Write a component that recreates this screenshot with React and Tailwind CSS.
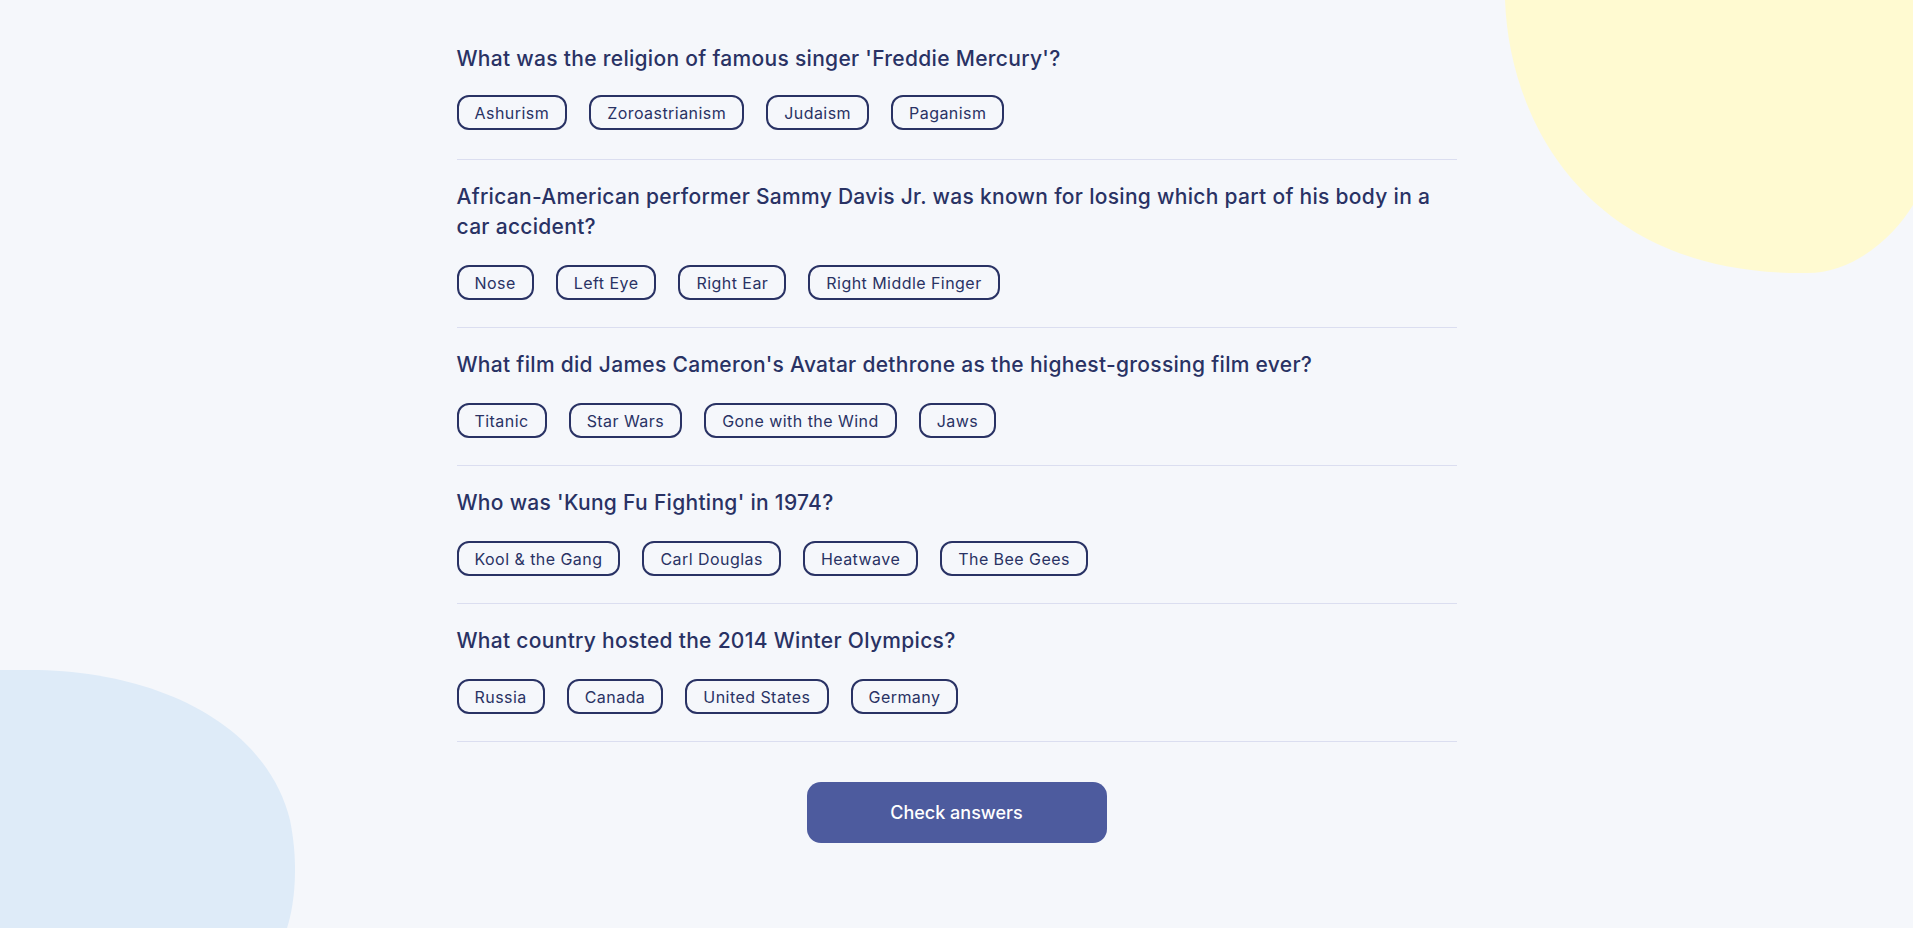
import { useState } from "react";

const questions = [
    {
        id: 1,
        question: "What was the religion of famous singer 'Freddie Mercury'?",
        answers: ["Ashurism", "Zoroastrianism", "Judaism", "Paganism"],
    },
    {
        id: 2,
        question: "African-American performer Sammy Davis Jr. was known for losing which part of his body in a car accident?",
        answers: ["Nose", "Left Eye", "Right Ear", "Right Middle Finger"],
    },
    {
        id: 3,
        question: "What film did James Cameron's Avatar dethrone as the highest-grossing film ever?",
        answers: ["Titanic", "Star Wars", "Gone with the Wind", "Jaws"],
    },
    {
        id: 4,
        question: "Who was 'Kung Fu Fighting' in 1974?",
        answers: ["Kool & the Gang", "Carl Douglas", "Heatwave", "The Bee Gees"],
    },
    {
        id: 5,
        question: "What country hosted the 2014 Winter Olympics?",
        answers: ["Russia", "Canada", "United States", "Germany"],
    },
];

function Question({question, answers, selected, onSelect, first}){
    return (
        <div className={(first ? "pb-[29px] " : "pt-[22px] pb-[27px] ") + "border-b border-[#dbdef0]"}>
            <h2 className="text-[21px] leading-[30px] font-medium text-[#293264] tracking-[0.3px]">
                {question}
            </h2>
            <div className={"flex gap-[22px] " + (first ? "mt-[21px]" : "mt-[23px]")}>
                {answers.map(answer => (
                    <button
                        key={answer}
                        onClick={() => onSelect(answer)}
                        className={"h-[35px] px-[16px] rounded-[12px] border-2 border-[#293264] text-[16px] tracking-[0.45px] text-[#293264] font-normal " +
                            (selected === answer ? "bg-[#d6dbf5]" : "bg-transparent")}>
                        {answer}
                    </button>
                ))}
            </div>
        </div>
    )
}

export default function App(){
    const [selected, setSelected] = useState({});

    function handleSelect(id, answer){
        setSelected(prev => ({...prev, [id]: answer}));
    }

    return (
        <div className="relative min-h-screen overflow-hidden bg-[#f5f7fb]" style={{fontFamily: "Inter, 'Noto Sans', sans-serif"}}>
            <svg className="absolute top-0 right-0" width="408" height="274" viewBox="0 0 408 274">
                <path d="M0 0 C 5 130, 90 275, 300 273 C 350 274, 390 235, 408 205 L408 0 Z" fill="#fffad1" />
            </svg>
            <svg className="absolute left-0 top-[670px]" width="300" height="258" viewBox="0 0 300 258">
                <path d="M0 0 L30 0 C 150 0, 265 50, 290 150 C 300 200, 293 240, 287 258 L0 258 Z" fill="#deebf8" />
            </svg>
            <div className="relative w-[1000px] mx-auto pt-[44px]">
                {questions.map((q, i) => (
                    <Question
                        key={q.id}
                        first={i === 0}
                        question={q.question}
                        answers={q.answers}
                        selected={selected[q.id]}
                        onSelect={answer => handleSelect(q.id, answer)}>
                    </Question>
                ))}
                <div className="flex justify-center mt-[40px]">
                    <button className="w-[300px] h-[61px] rounded-[14px] bg-[#4d5b9e] text-white text-[18px] font-medium">
                        Check answers
                    </button>
                </div>
            </div>
        </div>
    )
}
